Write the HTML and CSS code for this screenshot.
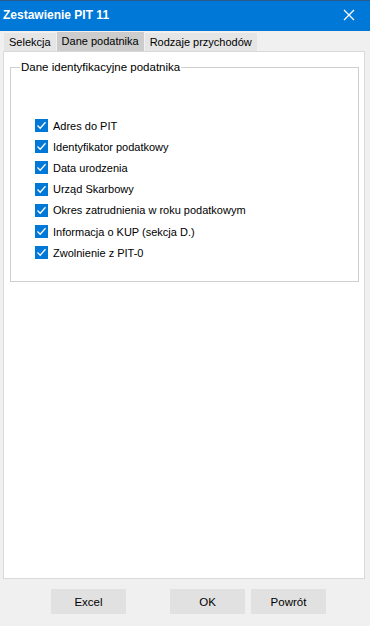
FILE: index.html
```html
<!DOCTYPE html>
<html lang="pl">
<head>
    <meta charset="UTF-8">
    <meta name="viewport" content="width=device-width, initial-scale=1.0">
    <title>Zestawienie PIT 11</title>
    <link rel="stylesheet" href="styles.css">
</head>
<body>
    <div class="window">
        <div class="titlebar">
            <span class="title">Zestawienie PIT 11</span>
            <svg class="close" width="12" height="12" viewBox="0 0 12 12">
                <path d="M1 1 L11 11 M11 1 L1 11" stroke="#fff" stroke-width="1.3" fill="none"/>
            </svg>
        </div>

        <div class="tabs">
            <div class="tab">Selekcja</div>
            <div class="tab active">Dane podatnika</div>
            <div class="tab">Rodzaje przychodów</div>
        </div>

        <div class="panel">
            <fieldset class="group">
                <legend>Dane identyfikacyjne podatnika</legend>
                <div class="checks">
                    <label class="check"><span class="box"></span>Adres do PIT</label>
                    <label class="check"><span class="box"></span>Identyfikator podatkowy</label>
                    <label class="check"><span class="box"></span>Data urodzenia</label>
                    <label class="check"><span class="box"></span>Urząd Skarbowy</label>
                    <label class="check"><span class="box"></span>Okres zatrudnienia w roku podatkowym</label>
                    <label class="check"><span class="box"></span>Informacja o KUP (sekcja D.)</label>
                    <label class="check"><span class="box"></span>Zwolnienie z PIT-0</label>
                </div>
            </fieldset>
        </div>

        <div class="buttons">
            <button class="btn">Excel</button>
            <button class="btn ok">OK</button>
            <button class="btn">Powrót</button>
        </div>
    </div>
</body>
</html>
```

FILE: styles.css
```css
html, body {
    margin: 0;
    padding: 0;
}
body {
    font-family: "Liberation Sans", Arial, sans-serif;
    font-size: 11px;
    color: #000;
    background: #f0f0f0;
}
.window {
    width: 370px;
    height: 626px;
    display: flex;
    flex-direction: column;
    background: #f0f0f0;
}
.titlebar {
    height: 31px;
    background: #0078d7;
    border-top: 1px solid #2a5a8a;
    box-sizing: border-box;
    display: flex;
    align-items: center;
    justify-content: space-between;
    padding: 0 15px 2px 3px;
}
.title {
    color: #fff;
    font-weight: bold;
    font-size: 12px;
}
.close {
    display: block;
}
.tabs {
    height: 20px;
    display: flex;
    align-items: flex-end;
    padding-left: 4px;
    gap: 1px;
}
.tab {
    height: 18px;
    line-height: 18px;
    padding: 0 5px;
    background: #e5e5e5;
    white-space: nowrap;
}
.tab.active {
    height: 19px;
    line-height: 19px;
    background: #cccccc;
}
.panel {
    height: 528px;
    margin: 0 5px 0 3px;
    background: #fff;
    border: 1px solid #d9d9d9;
    box-sizing: border-box;
    padding: 8px 5px 0 6px;
}
.group {
    margin: 0;
    height: 222px;
    box-sizing: border-box;
    border: 1px solid #cfcfcf;
    padding: 0;
}
.group legend {
    padding: 0 1px;
    margin-left: 9px;
    line-height: 14px;
    font-size: 11.5px;
}
.checks {
    padding: 41px 0 0 24px;
    display: flex;
    flex-direction: column;
}
.check {
    height: 21.2px;
    display: flex;
    align-items: center;
}
.box {
    width: 13px;
    height: 13px;
    margin-right: 5px;
    background: #0078d7 url("data:image/svg+xml,%3Csvg xmlns='http://www.w3.org/2000/svg' width='13' height='13'%3E%3Cpath d='M2.5 6.5 L5.2 9.2 L10.5 3.3' stroke='white' stroke-width='1.3' fill='none'/%3E%3C/svg%3E") no-repeat;
    flex: none;
}
.buttons {
    display: flex;
    padding: 10px 0 0 51px;
}
.btn {
    width: 75px;
    height: 25px;
    background: #e1e1e1;
    border: 1px solid #e1e1e1;
    font-family: inherit;
    font-size: 11.5px;
    color: #000;
    padding: 0;
    margin-right: 6px;
}
.btn.ok {
    margin-left: 38px;
}
```
